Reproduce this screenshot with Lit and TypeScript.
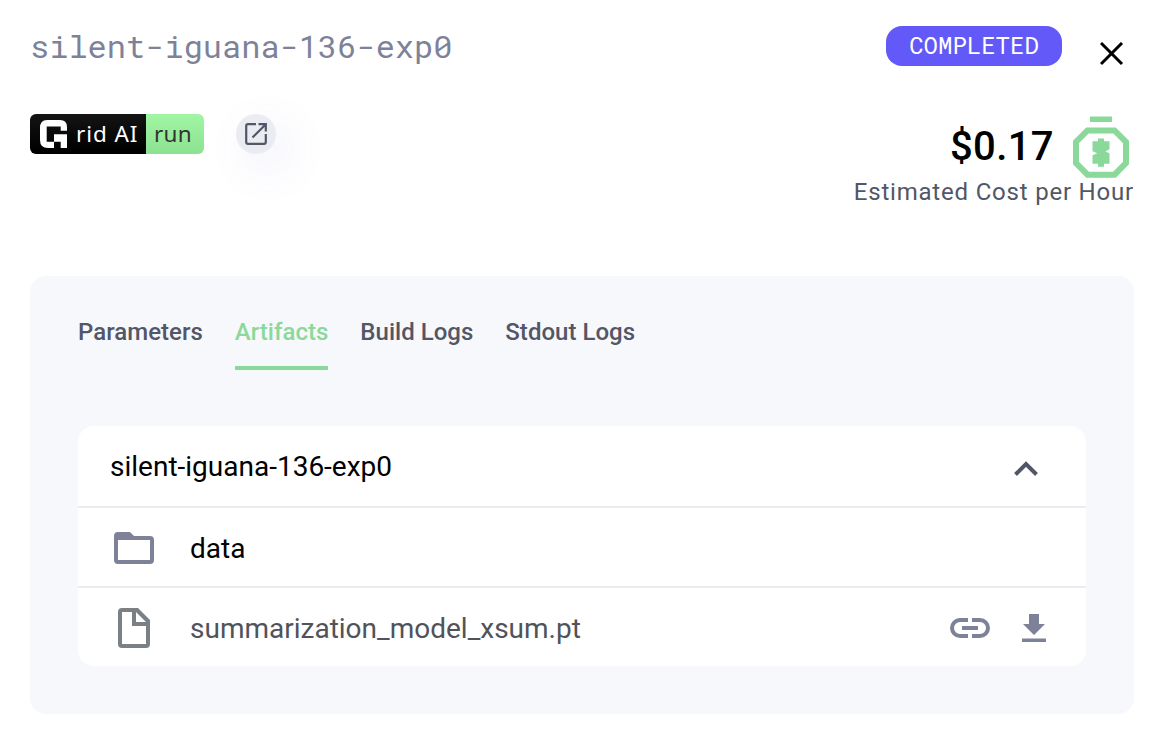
import { LitElement, html, svg, css } from "lit";
import { customElement, property, state } from "lit/decorators.js";
import { classMap } from "lit/directives/class-map.js";

@customElement("run-badge")
class RunBadge extends LitElement {
  static styles = css`
    :host { display: flex; width: 174px; height: 40px; border-radius: 6px; overflow: hidden; font: 22.5px/40px "Noto Sans", sans-serif; }
    .brand { display: flex; width: 116px; background: linear-gradient(#141414, #000 90%); color: #fff; }
    .logo { margin: 6px 9px 0 10px; width: 27px; height: 29px; flex: none; }
    .name { letter-spacing: 0.9px; white-space: nowrap; }
    .kind { width: 58px; box-sizing: border-box; padding-left: 8px; background: linear-gradient(#a0f6a3, #8de292); color: #333; letter-spacing: 0.3px; }
  `;
  render() {
    return html`
      <div class="brand">
        <svg class="logo" viewBox="0 0 27 29">
          <path fill="#fff" d="M7 0H20Q27 0 27 7V10.7H20.7V6.5H6.7V21.7H14V14.3H27V28H20.7V21.7H14V28H8Q0 28 0 20V8Q0 0 7 0Z" />
        </svg>
        <span class="name">rid AI</span>
      </div>
      <div class="kind">run</div>
    `;
  }
}

const icons = {
  close: svg`<path d="M1 1 22 22M22 1 1 22" stroke="#000" stroke-width="3" fill="none"/>`,
  open: svg`<path d="M11 1.2H3Q1.2 1.2 1.2 3V19Q1.2 20.8 3 20.8H19Q20.8 20.8 20.8 19V11M13.5 1.2H20.8V8.5M20.3 1.7 7.5 14.5" stroke="#525666" stroke-width="2.2" fill="none"/>`,
};

@customElement("app-root")
class AppRoot extends LitElement {
  @property() run = "silent-iguana-136-exp0";
  @state() private active = "Artifacts";

  static styles = css`
    :host { display: block; font-family: Roboto, sans-serif; color: #000; }
    svg { display: block; flex: none; }
    .page { box-sizing: border-box; width: 1156px; height: 734px; padding: 26px 22px 20px 30px; background: #fff; display: flex; flex-direction: column; }
    .head { display: flex; height: 88px; align-items: flex-start; }
    .title { flex: 1; font: 32px/40px "Roboto Mono", "Liberation Mono", monospace; color: #7e8299; }
    .status { width: 176px; height: 40px; border-radius: 16px; background: #6259f8; color: #fff; text-align: center; font: 400 24px/38px "Roboto Mono", "Liberation Mono", monospace; }
    .close { margin: 16px 10px 0 38px; }
    .summary { display: flex; height: 162px; align-items: flex-start; }
    .open { margin-left: 32px; width: 40px; height: 40px; border-radius: 50%; background: #ebecf2; display: flex; align-items: center; justify-content: center; box-shadow: 12px 14px 44px rgba(100, 110, 210, 0.12); }
    .cost { margin-left: auto; display: flex; flex-direction: column; align-items: flex-end; }
    .price { display: flex; height: 64px; }
    .amount { font-size: 40px; line-height: 66px; font-weight: 500; letter-spacing: 0.4px; margin-right: 19px; }
    .timer { margin: 2px 5px 0 0; }
    .caption { font-size: 24px; line-height: 28px; letter-spacing: 0.8px; color: #525666; white-space: nowrap; }
    .panel { height: 438px; box-sizing: border-box; border-radius: 16px; background: #f7f8fc; padding: 36px 48px 48px; }
    .tabs { display: flex; gap: 32px; height: 114px; }
    .tab { height: 58px; box-sizing: border-box; font-size: 24px; line-height: 40px; font-weight: 500; color: #525666; white-space: nowrap; letter-spacing: 0.02px; }
    .tab.on { color: #8ad89a; border-bottom: 4px solid #8ad89a; }
    .files { height: 240px; border-radius: 16px; background: #fff; overflow: hidden; }
    .row { box-sizing: border-box; height: 80px; display: flex; align-items: center; font-size: 28px; line-height: 40px; padding: 2px 38px 0 36px; }
    .row + .row { border-top: 2px solid #ebecf2; }
    .row.top { padding: 2px 46px 0 32px; height: 80px; }
    .chevron { margin-top: 4px; }
    .glyph { width: 40px; margin-right: 36px; display: flex; justify-content: center; }
    .label { flex: 1; }
    .entry { padding-top: 2px; }
    .file { color: #50535a; }
    .link { margin-right: 30px; }
  `;

  render() {
    const tabs = ["Parameters", "Artifacts", "Build Logs", "Stdout Logs"];
    return html`
      <div class="page">
        <div class="head">
          <div class="title">${this.run}</div>
          <div class="status">COMPLETED</div>
          <svg class="close" width="24" height="24" viewBox="0 0 24 24">${icons.close}</svg>
        </div>
        <div class="summary">
          <run-badge></run-badge>
          <div class="open"><svg width="22" height="22" viewBox="0 0 22 22">${icons.open}</svg></div>
          <div class="cost">
            <div class="price">
              <span class="amount">$0.17</span>
              <svg class="timer" width="56" height="62" viewBox="0 0 56 62">
                <path fill="#8ad89a" d="M17 0.5H39V6H17Z" />
                <path fill="none" stroke="#8ad89a" stroke-width="6" d="M14.5 14.4H41.5L53 26V47L41.5 58.7H14.5L3 47V26Z" />
                <path fill="#8ad89a" d="M25 22.5H31V25.3H36.5V33.3L32.3 35.5L36.5 37.3V47.7H31V50.7H25V47.7H19.5V39.3L24.3 37.2L19.5 35.2V25.3H25Z" />
              </svg>
            </div>
            <div class="caption">Estimated Cost per Hour</div>
          </div>
        </div>
        <div class="panel">
          <div class="tabs">
            ${tabs.map((t) => html`<div class=${classMap({ tab: true, on: t === this.active })} @click=${() => (this.active = t)}>${t}</div>`)}
          </div>
          <div class="files">
            <div class="row top">
              <span class="label">${this.run}</span>
              <svg class="chevron" width="28" height="20" viewBox="0 0 28 20"><path d="M3.5 15.5 14 5 24.5 15.5" fill="none" stroke="#525666" stroke-width="4"/></svg>
            </div>
            <div class="row">
              <span class="glyph"><svg width="40" height="32" viewBox="0 0 40 32"><path fill="#7e8299" fill-rule="evenodd" d="M4 0H16L20 4H36Q40 4 40 8V28Q40 32 36 32H4Q0 32 0 28V4Q0 0 4 0ZM4 8V28H36V8Z"/></svg></span>
              <span class="label entry">data</span>
            </div>
            <div class="row">
              <span class="glyph"><svg width="32" height="40" viewBox="0 0 32 40"><path fill="#7b8084" fill-rule="evenodd" d="M4 0H20L32 12V36Q32 40 28 40H4Q0 40 0 36V4Q0 0 4 0ZM4 4V36H28V18H14V4ZM18 4V14H28Z"/></svg></span>
              <span class="label entry file">summarization_model_xsum.pt</span>
              <svg class="link" width="40" height="20" viewBox="0 0 40 20"><path fill="none" stroke="#7e8299" stroke-width="4" d="M18 2H10A8 8 0 0 0 10 18H18M22 2H30A8 8 0 0 1 30 18H22M12 10H28"/></svg>
              <svg width="28" height="28" viewBox="0 0 28 28"><path fill="#7e8299" d="M9 0H19V10H25L14 21L3 10H9ZM2 24.5H26V28H2Z"/></svg>
            </div>
          </div>
        </div>
      </div>
    `;
  }
}
